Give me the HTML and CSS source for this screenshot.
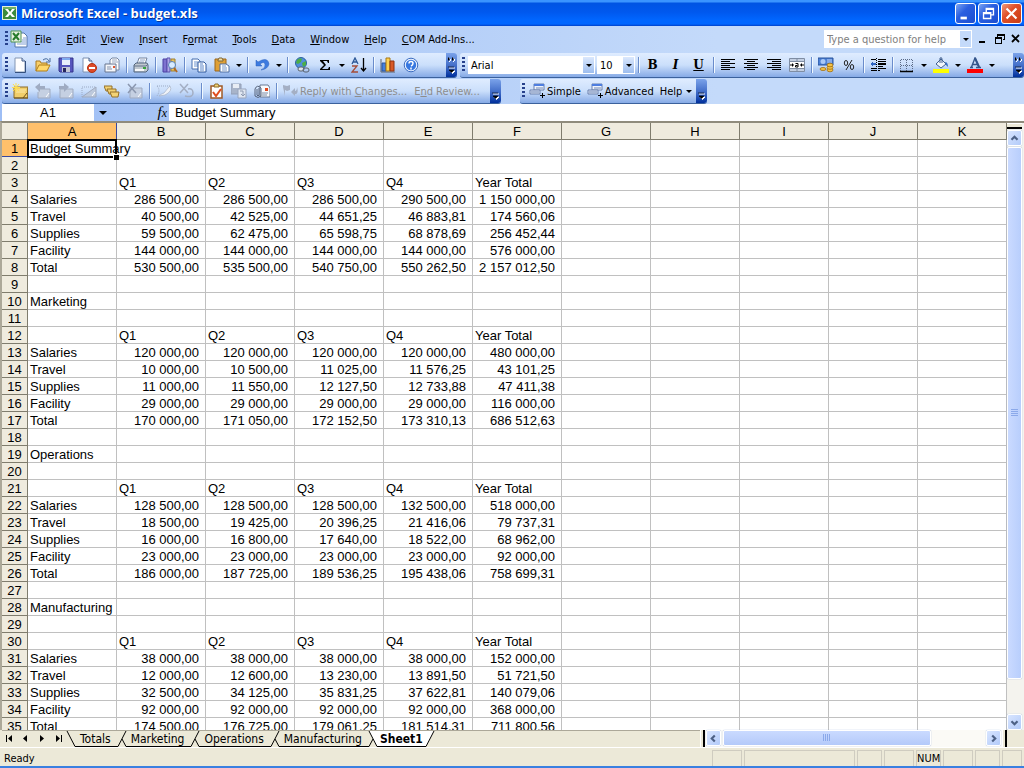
FILE: index.html
```html
<!DOCTYPE html>
<html lang="en">
<head>
<meta charset="utf-8">
<title>Microsoft Excel - budget.xls</title>
<link rel="stylesheet" href="styles.css">
</head>
<body>
<div class="window">
  <header class="titlebar">
    <svg class="icon" viewBox="0 0 16 16"><path d="M0 1h15v14H0z" fill="#e6efdf"/><path d="M1 2h13v12H1z" fill="#3c8a3c"/><path d="M1 2h13v2H1z" fill="#6fb065"/><path d="M3 4h3l2 3 2-3h3l-3.500 4L13 12h-3L8 9.500 6 12H3l3.500-4z" fill="#fff"/></svg>
    <h1 class="title">Microsoft Excel - budget.xls</h1>
    <button class="winbtn" aria-label="Minimize"><svg viewBox="0 0 21 21"><path d="M5 14h7v3H5z" fill="#fff"/></svg></button>
    <button class="winbtn" aria-label="Restore"><svg viewBox="0 0 21 21"><path d="M8 9V5h8v7h-3M8 6h8M5 9.500h8V16H5zM5 10.500h8" fill="none" stroke="#fff" stroke-width="1.500"/></svg></button>
    <button class="winbtn winbtn-close" aria-label="Close"><svg viewBox="0 0 21 21"><path d="M5 5l11 11M16 5L5 16" stroke="#fff" stroke-width="2.400"/></svg></button>
  </header>

  <div class="bars">
    <nav class="menubar">
      <span class="grip"></span>
      <svg class="icon book" viewBox="0 0 18 18"><path d="M5 3h9l3 3v11H5z" fill="#fff" stroke="#5577aa"/><path d="M13 8h3M12 10h4M11 12h5M7 14h9" stroke="#7e9fd4"/><path d="M1 1h10v11H1z" fill="#e6f0e0" stroke="#4f9450"/><path d="M3 3l6 7M9 3l-6 7" stroke="#267b2b" stroke-width="2"/></svg>
      <button class="menu"><u>F</u>ile</button>
      <button class="menu"><u>E</u>dit</button>
      <button class="menu"><u>V</u>iew</button>
      <button class="menu"><u>I</u>nsert</button>
      <button class="menu">F<u>o</u>rmat</button>
      <button class="menu"><u>T</u>ools</button>
      <button class="menu"><u>D</u>ata</button>
      <button class="menu"><u>W</u>indow</button>
      <button class="menu"><u>H</u>elp</button>
      <button class="menu"><u>C</u>OM Add-Ins...</button>
      <div class="combo ask">
        <input class="field" type="text" placeholder="Type a question for help" aria-label="Type a question for help">
        <button class="drop" aria-label="Recent questions"><i class="tri"></i></button>
      </div>
      <button class="mdi" aria-label="Minimize workbook"><svg viewBox="0 0 12 12"><path d="M1 8h6v2H1z"/></svg></button>
      <button class="mdi" aria-label="Restore workbook"><svg viewBox="0 0 12 12"><path d="M3 1h8v6H9V6h1V3H4v1H3zM1 4h7v7H1zM2 6v4h5V6z" fill-rule="evenodd"/></svg></button>
      <button class="mdi" aria-label="Close workbook"><svg viewBox="0 0 12 12"><path d="M2 2l7 7M9 2L2 9" stroke="#000" stroke-width="1.800"/></svg></button>
    </nav>

    <div class="row">
      <div class="toolbar tb-standard">
        <span class="grip"></span>
        <button class="tool" aria-label="New"><svg viewBox="0 0 16 16"><path d="M3 1h7l3 3v11H3z" fill="#fff" stroke="#8396b4"/><path d="M13.500 4v11.500H3" fill="none" stroke="#34507e"/><path d="M10 1v3h3" fill="#c9d8ef" stroke="#47618d"/></svg></button>
        <button class="tool" aria-label="Open"><svg viewBox="0 0 16 16"><path d="M1 14V4h4l1 2h6v3" fill="#f8cf6b" stroke="#a87a20"/><path d="M1 14l3-6h11l-3 6z" fill="#ffd86b" stroke="#b07e19"/><path d="M8 3q4-3 6 1M15 1v4h-4" fill="none" stroke="#46699c"/></svg></button>
        <button class="tool" aria-label="Save"><svg viewBox="0 0 16 16"><path d="M1 1h14v14H2l-1-1z" fill="#5655bd" stroke="#34348c"/><path d="M4 1h8v7H4z" fill="#e8eefb"/><path d="M4 1h8v2H4z" fill="#7faaf0"/><path d="M4 10h8v5H4z" fill="#c3c7d6"/><path d="M5 11h3v4H5z" fill="#26265e"/></svg></button>
        <button class="tool" aria-label="Permission"><svg viewBox="0 0 16 16"><path d="M2 1h6l3 3v11H2z" fill="#fff" stroke="#7d90b2"/><path d="M8 1v3h3" fill="#cddcf2" stroke="#47618d"/><circle cx="11" cy="11" r="4.500" fill="#dd4a28" stroke="#b2300f"/><path d="M8 10h6v2H8z" fill="#fff"/></svg></button>
        <button class="tool" aria-label="E-mail"><svg viewBox="0 0 16 16"><path d="M6 7V3l2-2h5l2 2v10H6z" fill="#fff" stroke="#7787a3"/><path d="M8 3h5M8 5h6" stroke="#9aa9c2"/><path d="M1 7h11v8H1z" fill="#f4f6fa" stroke="#66758f"/><path d="M3 10h4M3 12h5" stroke="#8694ad"/><path d="M9 9h2v2H9z" fill="#e2572e"/></svg></button>
        <span class="sep"></span>
        <button class="tool" aria-label="Print"><svg viewBox="0 0 16 16"><path d="M4 7l2-6h8l-2 6z" fill="#fff" stroke="#7484a0"/><path d="M7 3h5M6 5h5" stroke="#8ea4c9"/><path d="M1 8l2-2h11l1 2v5l-2 2H1z" fill="#c0c8d0" stroke="#53657c"/><path d="M1 9h12l2-2" fill="none" stroke="#62738a"/><path d="M2 12h9v2H2z" fill="#f7f8fa"/><path d="M10 10h3v2h-3z" fill="#39a33d"/></svg></button>
        <span class="sep"></span>
        <button class="tool" aria-label="Research"><svg viewBox="0 0 16 16"><path d="M1 2h4v13H1z" fill="#7e72cf" stroke="#4a3fa2"/><path d="M5 1h3v14H5z" fill="#b1a8e8" stroke="#5a50ad"/><path d="M9 2h4v12H9z" fill="#e6c25e" stroke="#a08030"/><circle cx="10" cy="8" r="3.500" fill="#d8ecff" stroke="#5680b4"/><path d="M12 11l3 4" stroke="#b06820" stroke-width="2"/></svg></button>
        <span class="sep"></span>
        <button class="tool" aria-label="Copy"><svg viewBox="0 0 16 16"><path d="M1 2h6l2 2v8H1z" fill="#fff" stroke="#476fae"/><path d="M3 5h4M3 7h4M3 9h4" stroke="#6d94cf"/><path d="M7 5h6l2 2v8H7z" fill="#fff" stroke="#2f599d"/><path d="M9 9h4M9 11h4M9 13h4M9 7h3" stroke="#5b86c9"/></svg></button>
        <button class="tool" aria-label="Paste"><svg viewBox="0 0 16 16"><path d="M1 2h11v12H1z" fill="#dfa036" stroke="#9c671a"/><path d="M4 3l1-2h3l1 2v1H4z" fill="#f3dfa4" stroke="#7d6639"/><path d="M6 7h6l3 2v6H6z" fill="#fff" stroke="#4e6ea3"/><path d="M8 9h4M8 11h5M8 13h5" stroke="#7697ca"/></svg></button>
        <button class="more" aria-label="Paste options"><i class="tri"></i></button>
        <span class="sep"></span>
        <button class="tool" aria-label="Undo"><svg viewBox="0 0 16 16"><path d="M2 3v6h6L6 7q4-3 5 0 1 4-4 6 7-1 8-6-1-6-7-4L4 5z" fill="#3d7be0" stroke="#2b5fbb" stroke-width=".5"/></svg></button>
        <button class="more" aria-label="Undo list"><i class="tri"></i></button>
        <span class="sep"></span>
        <button class="tool" aria-label="Insert Hyperlink"><svg viewBox="0 0 16 16"><circle cx="7" cy="6" r="5.500" fill="#4f8edb" stroke="#2d629f"/><path d="M3 3q3-3 5-1l-1 3-3 2-2-1zM8 6l4-2v4l-3 2z" fill="#4cae45"/><rect x="4" y="10" width="6" height="4" rx="2" fill="#dfe3e8" stroke="#59636f"/><rect x="9" y="11" width="6" height="4" rx="2" fill="none" stroke="#59636f"/></svg></button>
        <button class="tool" aria-label="AutoSum"><svg viewBox="0 0 16 16"><path d="M3 3h9v3h-1l-1-2H6l3 4-4 4h6l1-2h1v3H3v-1l4-4-4-4z"/></svg></button>
        <button class="more" aria-label="AutoSum options"><i class="tri"></i></button>
        <button class="tool" aria-label="Sort Ascending"><svg viewBox="0 0 16 16"><path d="M1 7l3-6 3 6M2 5h4" fill="none" stroke="#2b5797" stroke-width="1.300"/><path d="M1 9h5l-5 6h6" fill="none" stroke="#a44c38" stroke-width="1.300"/><path d="M12.500 1v13M10 11l2.500 3 2.500-3" fill="none" stroke="#000" stroke-width="1.300"/></svg></button>
        <span class="sep"></span>
        <button class="tool" aria-label="Chart Wizard"><svg viewBox="0 0 16 16"><path d="M1 2v13h14" fill="none" stroke="#5a6271"/><path d="M2 6h4v8H2z" fill="#4580df" stroke="#2a549c"/><path d="M6 1h4v13H6z" fill="#ffd24f" stroke="#a77715"/><path d="M10 4h4v10h-4z" fill="#d85a29" stroke="#8f3311"/></svg></button>
        <button class="tool" aria-label="Help"><svg viewBox="0 0 16 16"><circle cx="8" cy="8" r="6.800" fill="#eaf2ff" stroke="#3b6cc0"/><circle cx="8" cy="8" r="5.200" fill="#3878e0"/><path d="M6 6.500q0-2 2-2t2 1.800-2 2.700M8 10.500v2" fill="none" stroke="#fff" stroke-width="1.500"/></svg></button>
        <button class="cap" aria-label="Standard toolbar options"><svg viewBox="0 0 11 24"><path d="M2 4l2 2-2 2M6 4l2 2-2 2" fill="none" stroke="#fff" transform="translate(1 1)"/><path d="M2 4l2 2-2 2zM6 4l2 2-2 2z"/><path d="M3 15h6M4 18h5l-2.500 2.500z" fill="#fff" stroke="#fff"/><path d="M2 14h6M3 17h5l-2.500 2.500z" stroke="#000" stroke-width=".6"/></svg></button>
      </div>
      <div class="toolbar tb-format">
        <span class="grip"></span>
        <div class="combo font"><select class="field" aria-label="Font"><option>Arial</option></select><span class="drop"><i class="tri"></i></span></div>
        <div class="combo size"><select class="field" aria-label="Font Size"><option>10</option></select><span class="drop"><i class="tri"></i></span></div>
        <span class="sep"></span>
        <button class="tool letter">B</button>
        <button class="tool letter italic">I</button>
        <button class="tool letter under">U</button>
        <span class="sep"></span>
        <button class="tool" aria-label="Align Left"><svg class="crisp" viewBox="0 0 16 16"><path d="M1 2h14v1H1zM1 4h9v1H1zM1 6h14v1H1zM1 8h9v1H1zM1 10h14v1H1zM1 12h9v1H1z"/></svg></button>
        <button class="tool" aria-label="Center"><svg class="crisp" viewBox="0 0 16 16"><path d="M1 2h14v1H1zM4 4h8v1H4zM1 6h14v1H1zM4 8h8v1H4zM1 10h14v1H1zM4 12h8v1H4z"/></svg></button>
        <button class="tool" aria-label="Align Right"><svg class="crisp" viewBox="0 0 16 16"><path d="M1 2h14v1H1zM6 4h9v1H6zM1 6h14v1H1zM6 8h9v1H6zM1 10h14v1H1zM6 12h9v1H6z"/></svg></button>
        <button class="tool" aria-label="Merge and Center"><svg viewBox="0 0 16 16"><path d="M.5 1.500h15v13H.5z" fill="#fff" stroke="#7f8da3"/><path d="M1 2h14v2H1zM1 12h14v2H1z" fill="#c3cfe2"/><path d="M0 4.500h16M0 11.500h16M8 1v3M8 12v3" stroke="#7f8da3"/><path d="M1 8h3M12 8h3" stroke="#000"/><path d="M3 6l2 2-2 2zM13 6l-2 2 2 2z"/><path d="M6.500 6.500h2.500v3.500h-2.500v-1.500h2" fill="none" stroke="#000"/></svg></button>
        <span class="sep"></span>
        <button class="tool" aria-label="Currency Style"><svg viewBox="0 0 16 16"><path d="M0 1h15v7H0z" fill="#4b7fd5" stroke="#2a559c"/><circle cx="5" cy="4.500" r="2.500" fill="#a9c9f7"/><path d="M9 3h5M9 5h5" stroke="#c1d7fa"/><g fill="#f3c244" stroke="#a06d12" stroke-width=".8"><ellipse cx="12" cy="13" rx="3" ry="1.800"/><ellipse cx="12" cy="10.500" rx="3" ry="1.800"/><ellipse cx="12" cy="8" rx="3" ry="1.800"/><ellipse cx="5" cy="12" rx="3" ry="1.500"/></g></svg></button>
        <button class="tool" aria-label="Percent Style"><svg viewBox="0 0 16 16"><path d="M11 3L5 13" stroke="#222"/><ellipse cx="5" cy="6" rx="1.700" ry="2.500" fill="none" stroke="#222"/><ellipse cx="11" cy="10" rx="1.700" ry="2.500" fill="none" stroke="#222"/></svg></button>
        <span class="sep"></span>
        <button class="tool" aria-label="Decrease Indent"><svg class="crisp" viewBox="0 0 16 16"><path d="M1 2h5v1H1zM8 2h8v1H8zM8 4h8v1H8zM8 6h8v2H8zM8 9h5v1H8zM1 11h5v1H1zM8 11h8v1H8zM1 13h5v1H1zM8 13h2v1H8z"/><path d="M6.500 1v14" stroke="#000" stroke-dasharray="1 1"/><path d="M0 7l3-3v2h3v2H3v2z" fill="#2f65c3"/></svg></button>
        <span class="sep"></span>
        <button class="tool" aria-label="Borders"><svg viewBox="0 0 16 16"><path d="M1.500 14V2.500h12V14M7.500 3v11M2 8.500h11" fill="none" stroke="#5b6b87" stroke-dasharray="1 1"/><path d="M1 14.500h13" stroke="#000" stroke-width="1.500"/></svg></button>
        <button class="more" aria-label="Border options"><i class="tri"></i></button>
        <button class="tool" aria-label="Fill Color"><svg viewBox="0 0 16 16"><path d="M3 7l5-5 5 5-5 4z" fill="#f2f6fc" stroke="#43618f"/><path d="M7 6V1q2-1 2 1v4" fill="none" stroke="#43618f"/><path d="M12 5q3 0 3 5l-2-2z" fill="#3b73c6"/><path d="M0 12h16v4H0z" fill="#ffff00"/></svg></button>
        <button class="more" aria-label="Fill Color options"><i class="tri"></i></button>
        <button class="tool" aria-label="Font Color"><svg viewBox="0 0 16 16"><path d="M3 10.500h3M9 10.500h5M4.500 10L8 1l4 9M5.500 7.500h5" fill="none" stroke="#34558b" stroke-width="1.400"/><path d="M8 1l4 9" stroke="#34558b" stroke-width="2"/><path d="M0 12h16v4H0z" fill="#ff0000"/></svg></button>
        <button class="more" aria-label="Font Color options"><i class="tri"></i></button>
        <button class="cap" aria-label="Formatting toolbar options"><svg viewBox="0 0 11 24"><path d="M2 4l2 2-2 2M6 4l2 2-2 2" fill="none" stroke="#fff" transform="translate(1 1)"/><path d="M2 4l2 2-2 2zM6 4l2 2-2 2z"/><path d="M3 15h6M4 18h5l-2.500 2.500z" fill="#fff" stroke="#fff"/><path d="M2 14h6M3 17h5l-2.500 2.500z" stroke="#000" stroke-width=".6"/></svg></button>
      </div>
    </div>

    <div class="row">
      <div class="toolbar tb-review">
        <span class="grip"></span>
        <button class="tool" aria-label="New Comment"><svg viewBox="0 0 16 16"><path d="M2 4h14v11H2z" fill="#f1ce6a" stroke="#8a6a2a"/><path d="M4 7h10M4 9h9" stroke="#fbe9a9"/><path d="M11 15l4-5M2 15h14V5" fill="none" stroke="#6f541c"/><path d="M4 0v9M0 4.500h8M1 1l6 7M7 1L1 8" stroke="#ffdf52"/></svg></button>
        <button class="tool" aria-label="Previous Comment"><svg viewBox="0 0 16 16"><path d="M4 6h11v9H3V9" fill="#c5d0e2" stroke="#a0abc0"/><path d="M0 4l5-4v3h5v3H5v3z" fill="#9fabc2"/><path d="M11 14l3-4" stroke="#fff"/></svg></button>
        <button class="tool" aria-label="Next Comment"><svg viewBox="0 0 16 16"><path d="M2 6h13v9H2z" fill="#c5d0e2" stroke="#a0abc0"/><path d="M11 4L6 0v3H1v3h5v3z" fill="#9fabc2"/><path d="M11 14l3-4" stroke="#fff"/></svg></button>
        <button class="tool" aria-label="Show Comment"><svg viewBox="0 0 16 16"><path d="M1 14V4h14" fill="none" stroke="#9dabc4" stroke-dasharray="1 1"/><path d="M1 14L15 4v10z" fill="#bdc9dc" stroke="#a0abc0"/><path d="M11 13l3-4" stroke="#fff"/></svg></button>
        <button class="tool" aria-label="Show All Comments"><svg viewBox="0 0 16 16"><g fill="#f3d375" stroke="#94702a"><path d="M0 3h8v5H2z"/><path d="M3 6h9v5H5z"/><path d="M6 9h9l-1 5H8z"/></g></svg></button>
        <button class="tool" aria-label="Delete Comment"><svg viewBox="0 0 16 16"><path d="M3 5h12v10H3z" fill="#c5d0e2" stroke="#a0abc0"/><path d="M1 1l8 9M9 1L1 10" stroke="#8b97af" stroke-width="1.500"/><path d="M11 14l3-4" stroke="#fff"/></svg></button>
        <span class="sep"></span>
        <button class="tool" aria-label="Show Ink"><svg viewBox="0 0 16 16"><path d="M1 3h13M1 3q4 4 0 10" fill="none" stroke="#9dabc4" stroke-dasharray="1 1"/><path d="M14 3q3 5-5 9l-6 1q2-2 5-3 3-4 6-7z" fill="#eef2f8" stroke="#a8b3c7" stroke-width=".7"/></svg></button>
        <button class="tool" aria-label="Delete Ink"><svg viewBox="0 0 16 16"><path d="M1 1l8 9M9 1L1 10M6 13q8 2 8-3t-5-4" fill="none" stroke="#a3aec3" stroke-width="1.500"/></svg></button>
        <span class="sep"></span>
        <button class="tool" aria-label="Create Task"><svg viewBox="0 0 16 16"><path d="M3 3h11v12H3z" fill="#fff" stroke="#a05a24" stroke-width="1.500"/><path d="M6 3l1-2h3l1 2v1H6z" fill="#f3d375" stroke="#8a6a2a"/><path d="M5 9l3 4 5-7" fill="none" stroke="#df4c1c" stroke-width="2"/></svg></button>
        <button class="tool" aria-label="Update File"><svg viewBox="0 0 16 16"><path d="M0 1h10v10H0z" fill="#a8b4c9" stroke="#919eb6"/><path d="M2 1h6v4H2z" fill="#e8edf5"/><path d="M7 6h8v9H7z" fill="#dfe6f1" stroke="#98a5bd"/><path d="M9 8h3v4M10 11l2 2 2-2" stroke="#8e9ab1" fill="none"/></svg></button>
        <button class="tool" aria-label="Send as Attachment"><svg viewBox="0 0 16 16"><path d="M6 2h8l2 3v9H6z" fill="#f8fafd" stroke="#697993"/><path d="M11 5h3v3h-3z" fill="#e0481d"/><path d="M8 10h6M8 12h5" stroke="#7d8ca6"/><path d="M5 5v7q-1 2-2 0V6M1 13V6q2-5 6-1v8q-3 3-6 0" fill="none" stroke="#56637a"/></svg></button>
        <span class="sep"></span>
        <button class="text-tool muted" disabled><svg class="icon" viewBox="0 0 16 16"><path d="M1 2l4 1 3-1v5L5 8 3 7v6L1 4z" fill="#a4afc4"/><path d="M9 9l4-4v3q2 0 2-4 2 7-2 7v2z" fill="#a4afc4"/></svg><span>Reply with <u>C</u>hanges...</span></button>
        <button class="text-tool muted" disabled><span>E<u>n</u>d Review...</span></button>
        <button class="cap" aria-label="Reviewing toolbar options"><svg viewBox="0 0 11 24"><path d="M3 15h6M4 18h5l-2.500 2.500z" fill="#fff" stroke="#fff"/><path d="M2 14h6M3 17h5l-2.500 2.500z" stroke="#000" stroke-width=".6"/></svg></button>
      </div>
      <div class="toolbar tb-addin">
        <span class="grip"></span>
        <button class="text-tool"><svg class="icon" viewBox="0 0 16 16"><path d="M5 1h10v6H5z" fill="#eef3fc" stroke="#6b80ad"/><path d="M5 1h10v2H5z" fill="#4e7ee0"/><path d="M1 7h10v4H1z" fill="#dae3f4" stroke="#6b80ad"/><path d="M2 9h8M7 5h7" stroke="#7289b5"/><path d="M13.500 10v5M11 12.500h5" stroke="#000"/></svg><span>Simple</span></button>
        <button class="text-tool"><svg class="icon" viewBox="0 0 16 16"><path d="M5 1h10v6H5z" fill="#eef3fc" stroke="#6b80ad"/><path d="M5 1h10v2H5z" fill="#4e7ee0"/><path d="M1 7h10v4H1z" fill="#dae3f4" stroke="#6b80ad"/><path d="M2 9h8M7 5h7" stroke="#7289b5"/><path d="M13.500 10v5M11 12.500h5" stroke="#000"/></svg><span>Advanced</span></button>
        <button class="text-tool"><span>Help</span><i class="tri"></i></button>
        <button class="cap" aria-label="Add-in toolbar options"><svg viewBox="0 0 11 24"><path d="M3 15h6M4 18h5l-2.500 2.500z" fill="#fff" stroke="#fff"/><path d="M2 14h6M3 17h5l-2.500 2.500z" stroke="#000" stroke-width=".6"/></svg></button>
      </div>
    </div>

    <div class="formula">
      <input class="namebox" type="text" value="A1" aria-label="Name Box">
      <button class="namedrop" aria-label="Names"><i class="tri big"></i></button>
      <button class="fx" aria-label="Insert Function"><i>f</i><i class="fx-sub">x</i></button>
      <input class="formula-text" type="text" value="Budget Summary" aria-label="Formula Bar">
    </div>
  </div>

  <main class="sheet">
    <div class="grid-view">
      <table class="grid">
        <thead><tr id="heads"><th class="corner"></th></tr></thead>
        <tbody id="cells"></tbody>
      </table>
    </div>
    <div class="vscroll">
      <span class="split-h"></span>
      <button class="scrollbtn" aria-label="Scroll up"><svg viewBox="0 0 15 15"><path d="M4 9l3.500-3.500L11 9" /></svg></button>
      <div class="vtrack"><span class="thumb"><svg viewBox="0 0 8 8"><path d="M0 .5h7M0 2.500h7M0 4.500h7M0 6.500h7"/></svg></span></div>
      <button class="scrollbtn" aria-label="Scroll down"><svg viewBox="0 0 15 15"><path d="M4 6l3.500 3.500L11 6" /></svg></button>
    </div>
  </main>

  <div class="tabrow">
    <div class="tabs">
      <button class="nav" aria-label="First sheet"><svg viewBox="0 0 12 12"><path d="M2 2h1v7H2zM8 2v7L4 5.500z"/></svg></button>
      <button class="nav" aria-label="Previous sheet"><svg viewBox="0 0 12 12"><path d="M7 2v7L3 5.500z"/></svg></button>
      <button class="nav" aria-label="Next sheet"><svg viewBox="0 0 12 12"><path d="M4 2v7l4-3.500z"/></svg></button>
      <button class="nav" aria-label="Last sheet"><svg viewBox="0 0 12 12"><path d="M9 2h1v7H9zM4 2v7l4-3.500z"/></svg></button>
      <svg class="slant" viewBox="0 0 10 16"><path d="M1 0l8 15.500h1" /></svg>
      <button class="tab">Totals</button>
      <svg class="slant" viewBox="0 0 10 16"><path d="M0 15.500h1L9 0M5 8l4 7.500h1"/></svg>
      <button class="tab">Marketing</button>
      <svg class="slant" viewBox="0 0 10 16"><path d="M0 15.500h1L9 0M5 8l4 7.500h1"/></svg>
      <button class="tab">Operations</button>
      <svg class="slant" viewBox="0 0 10 16"><path d="M0 15.500h1L9 0M5 8l4 7.500h1"/></svg>
      <button class="tab">Manufacturing</button>
      <svg class="slant" viewBox="0 0 10 16"><path class="fill" d="M1 0h9v16H9z"/><path d="M0 15.500h1L5 8M1 0l8 15.500h1"/></svg>
      <button class="tab active">Sheet1</button>
      <svg class="slant" viewBox="0 0 10 16"><path class="fill" d="M0 0h9L1 16H0z"/><path d="M0 15.500h1L9 0"/></svg>
    </div>
    <div class="hscroll">
      <span class="split-v"></span>
      <button class="scrollbtn" aria-label="Scroll left"><svg viewBox="0 0 15 15"><path d="M9 4L5.500 7.500 9 11"/></svg></button>
      <div class="htrack"><span class="thumb"><svg viewBox="0 0 8 8"><path d="M.5 0v7M2.500 0v7M4.500 0v7M6.500 0v7"/></svg></span></div>
      <button class="scrollbtn" aria-label="Scroll right"><svg viewBox="0 0 15 15"><path d="M6 4l3.500 3.500L6 11"/></svg></button>
      <span class="split-v"></span>
    </div>
  </div>

  <footer class="status">
    <span class="ready">Ready</span>
    <span class="pane p-s"></span><span class="pane p-l"></span><span class="pane p-xs"></span><span class="pane p-s"></span><span class="pane p-xs">NUM</span><span class="pane p-s"></span><span class="pane p-xs"></span><span class="pane p-end"></span>
  </footer>
</div>
<script src="grid.js"></script>
</body>
</html>
```

FILE: grid.js
```js
const heads = ["", "Q1", "Q2", "Q3", "Q4", "Year Total"];
const rows = [
  ["Budget Summary"],
  [],
  heads,
  ["Salaries", "286 500,00", "286 500,00", "286 500,00", "290 500,00", "1 150 000,00"],
  ["Travel", "40 500,00", "42 525,00", "44 651,25", "46 883,81", "174 560,06"],
  ["Supplies", "59 500,00", "62 475,00", "65 598,75", "68 878,69", "256 452,44"],
  ["Facility", "144 000,00", "144 000,00", "144 000,00", "144 000,00", "576 000,00"],
  ["Total", "530 500,00", "535 500,00", "540 750,00", "550 262,50", "2 157 012,50"],
  [],
  ["Marketing"],
  [],
  heads,
  ["Salaries", "120 000,00", "120 000,00", "120 000,00", "120 000,00", "480 000,00"],
  ["Travel", "10 000,00", "10 500,00", "11 025,00", "11 576,25", "43 101,25"],
  ["Supplies", "11 000,00", "11 550,00", "12 127,50", "12 733,88", "47 411,38"],
  ["Facility", "29 000,00", "29 000,00", "29 000,00", "29 000,00", "116 000,00"],
  ["Total", "170 000,00", "171 050,00", "172 152,50", "173 310,13", "686 512,63"],
  [],
  ["Operations"],
  [],
  heads,
  ["Salaries", "128 500,00", "128 500,00", "128 500,00", "132 500,00", "518 000,00"],
  ["Travel", "18 500,00", "19 425,00", "20 396,25", "21 416,06", "79 737,31"],
  ["Supplies", "16 000,00", "16 800,00", "17 640,00", "18 522,00", "68 962,00"],
  ["Facility", "23 000,00", "23 000,00", "23 000,00", "23 000,00", "92 000,00"],
  ["Total", "186 000,00", "187 725,00", "189 536,25", "195 438,06", "758 699,31"],
  [],
  ["Manufacturing"],
  [],
  heads,
  ["Salaries", "38 000,00", "38 000,00", "38 000,00", "38 000,00", "152 000,00"],
  ["Travel", "12 000,00", "12 600,00", "13 230,00", "13 891,50", "51 721,50"],
  ["Supplies", "32 500,00", "34 125,00", "35 831,25", "37 622,81", "140 079,06"],
  ["Facility", "92 000,00", "92 000,00", "92 000,00", "92 000,00", "368 000,00"],
  ["Total", "174 500,00", "176 725,00", "179 061,25", "181 514,31", "711 800,56"]
];
const letters = [..."ABCDEFGHIJK"];
const headRow = document.getElementById("heads");
const body = document.getElementById("cells");

function addCell(row, tag, text, cls) {
  const cell = document.createElement(tag);
  cell.textContent = text;
  if (cls) cell.className = cls;
  row.appendChild(cell);
  return cell;
}

letters.forEach((letter, i) => addCell(headRow, "th", letter, i === 0 ? "on" : ""));

rows.forEach((values, r) => {
  const row = document.createElement("tr");
  addCell(row, "th", r + 1, r === 0 ? "on" : "");
  letters.forEach((_, c) => {
    const text = values[c] || "";
    const cell = addCell(row, "td", text, text.includes(",") ? "num" : "");
    if (r === 0 && c === 0) {
      cell.className = "selected";
      const handle = document.createElement("span");
      handle.className = "handle";
      cell.appendChild(handle);
    }
  });
  body.appendChild(row);
});
```

FILE: styles.css
```css
* { box-sizing: border-box; }
body { margin: 0; }
button, input, select {
  font: inherit; color: inherit; border: 0; margin: 0; padding: 0;
  background: none; border-radius: 0; outline: 0;
}
svg { display: block; flex: none; }
.window {
  display: flex; flex-direction: column; height: 100vh; overflow: hidden;
  background: #ece9d8; border-bottom: 2px solid #3a80e0;
  font-family: "DejaVu Sans Condensed", "DejaVu Sans", sans-serif;
  font-size: 11px; color: #000;
}
.icon { width: 16px; height: 16px; }
.crisp { shape-rendering: crispEdges; }

.titlebar {
  display: flex; align-items: center; gap: 2px; height: 26px; flex: none; padding: 0 2px;
  background: linear-gradient(#3a94ff 0, #3a94ff 2px, #0054e3 3px, #0058ee 12px, #0066ff 20px, #0066ff 24px, #0040c8 26px);
}
.title {
  flex: 1; margin: 0; padding-left: 1px; font-size: 13px; line-height: 24px; font-weight: bold;
  font-family: "Open Sans", sans-serif; color: #fff; text-shadow: 1px 1px #0a3296;
}
.winbtn {
  width: 21px; height: 21px; border: 1px solid #fff; border-radius: 3px;
  background: linear-gradient(135deg, #7ba4f3, #2a5fe0 40%, #1c4ed0);
}
.winbtn svg { width: 19px; height: 19px; }
.winbtn-close { background: linear-gradient(135deg, #f09a7c, #e0502a 40%, #c83c14); }

.bars { flex: none; background: linear-gradient(90deg, #9ebef5, #c4dafa 70%); }
.menubar { display: flex; align-items: center; height: 26px; padding: 0 2px; }
.grip {
  width: 3px; height: 16px; margin: 0 2px 0 3px; flex: none;
  background: repeating-linear-gradient(#27418c 0, #27418c 2px, transparent 2px, transparent 4px);
}
.book { width: 18px; height: 18px; }
.menu { padding: 0 8px 0 7px; height: 20px; }
.combo { display: flex; background: #fff; padding: 1px; height: 18px; }
.combo .field { flex: 1; min-width: 0; padding-left: 2px; appearance: none; }
.drop {
  width: 11px; flex: none; display: flex; align-items: center; justify-content: center;
  background: linear-gradient(#dbe8fd, #9dbdee); pointer-events: none;
}
.ask { width: 148px; margin: 0 4px 0 auto; }
.ask .field::placeholder { color: #808080; opacity: 1; }
.ask .drop { background: #c4dafa; }
.mdi { width: 12px; margin-left: 2px; }
.mdi + .mdi { margin-left: 4px; }
.mdi svg { width: 12px; height: 12px; }
.tri { border: 3px solid transparent; border-top-color: #000; border-bottom: 0; }
.tri.big { border-width: 4px; border-bottom: 0; }

.row { display: flex; height: 26px; padding: 1px 0 0 2px; }
.toolbar {
  display: flex; align-items: center; height: 25px; border-radius: 3px;
  background: linear-gradient(#dfecff, #cbdffb 50%, #86aae6); border-bottom: 1px solid #3b619c;
}
.toolbar .grip { margin: 0 1px 0 2px; }
.tool {
  width: 23px; height: 22px; flex: none; display: flex; align-items: center; justify-content: center;
}
.tool svg { width: 16px; height: 16px; }
.sep { width: 6px; height: 16px; flex: none; background: linear-gradient(90deg, transparent 3px, #6a8ccb 3px, #6a8ccb 4px, #f1f9ff 4px, #f1f9ff 5px, transparent 5px); }
.more { width: 11px; height: 22px; flex: none; display: flex; align-items: center; justify-content: center; }
.cap {
  width: 11px; height: 24px; margin-left: auto; flex: none; border-radius: 0 3px 3px 0;
  background: linear-gradient(#7ba3ea, #3a66c4 60%, #00309c);
}
.cap svg { width: 11px; height: 24px; }
.tb-standard { width: 455px; margin-right: 3px; }
.tb-format { flex: 1; }
.tb-review { width: 499px; margin-right: 19px; }
.tb-addin { width: 187px; }
.tb-standard .grip, .tb-review .grip { margin-left: 3px; margin-right: 0; }
.font { width: 127px; margin: 0 2px; }
.size { width: 38px; }
.letter { font-family: "DejaVu Serif", serif; font-weight: bold; font-size: 12px; }
.italic { font-style: italic; }
.under { text-decoration: underline; }
.text-tool { display: flex; align-items: center; gap: 2px; padding: 0 3px; flex: none; white-space: nowrap; }
.muted { color: #8d8d8d; }
.tb-review .text-tool { padding-right: 4px; }
.tb-addin .text-tool .tri { margin-left: 2px; }

.formula { display: flex; height: 17px; padding-left: 2px; font-family: "Liberation Sans", Arial, sans-serif; font-size: 13px; }
.namebox { width: 92px; background: #fff; text-align: center; }
.namedrop { width: 18px; display: flex; align-items: center; justify-content: center; }
.fx { width: 57px; padding-right: 2px; text-align: right; font-family: "Liberation Serif", serif; font-size: 15px; line-height: 15px; }
.fx-sub { font-size: 12px; }
.formula-text { flex: 1; background: #fff; padding-left: 6px; }

.sheet { flex: 1; min-height: 0; display: flex; border-top: 2px solid #8f8b7c; border-left: 2px solid #aca899; }
.grid-view { flex: 1; min-width: 0; overflow: hidden; background: #fff; }
.grid {
  table-layout: fixed; border-collapse: separate; border-spacing: 0; width: 1005px;
  font-family: "Liberation Sans", Arial, sans-serif; font-size: 13px; line-height: 14px;
}
.grid th, .grid td { height: 17px; border-right: 1px solid #c0c0c0; border-bottom: 1px solid #c0c0c0; white-space: nowrap; }
.grid td { padding: 2px 6px 0 2px; }
.grid th { width: 89px; padding: 2px 0 0; font-weight: normal; background: #efebde; border-color: #7f7c6d; }
.grid th.corner { width: 26px; }
.grid th.on { background: #ffc06b; border-color: #3848a0; }
.grid .num { text-align: right; }
.grid .selected { position: relative; }
.selected::after { content: ""; position: absolute; inset: -1px -1px -2px -1px; border: 2px solid #000; }
.handle { position: absolute; right: -3px; bottom: -4px; width: 6px; height: 6px; background: #000; border: 1px solid #fff; border-width: 1px 0 0 1px; z-index: 1; }

.vscroll { width: 17px; flex: none; display: flex; flex-direction: column; padding-right: 2px; background: #f4f3ee; }
.split-h { height: 6px; background: #ece9d8; border-top: 1px solid #fff; border-bottom: 2px solid #000; flex: none; }
.scrollbtn {
  width: 15px; height: 15px; flex: none; border: 1px solid #fff; border-radius: 2px;
  background: linear-gradient(135deg, #d8e5ff, #b3cbf9); box-shadow: 0 0 1px #7f9fd8;
}
.scrollbtn svg { width: 13px; height: 13px; fill: none; stroke: #4d6185; stroke-width: 2.500; }
.vscroll .scrollbtn { height: 16px; margin-top: 1px; }
.vtrack { flex: 1; padding-top: 1px; }
.vtrack .thumb { width: 15px; height: 94%; background: linear-gradient(90deg, #cadaff, #b8cefc); }
.thumb {
  display: flex; align-items: center; justify-content: center; border: 1px solid #fff;
  border-radius: 2px; box-shadow: 0 0 1px #6f8fcc; background: linear-gradient(#cadaff, #b4cafa);
}
.thumb svg { width: 8px; height: 8px; stroke: #8ba9ea; }

.tabrow { display: flex; height: 17px; flex: none; padding-left: 2px; background: #ece9d8; }
.tabs { flex: 1; display: flex; border-top: 1px solid #aca899; }
.nav { width: 16px; height: 16px; display: flex; align-items: center; justify-content: center; }
.nav svg { width: 12px; height: 12px; }
.slant { width: 10px; height: 16px; fill: none; stroke: #000; }
.slant .fill { fill: #fff; stroke: none; }
.tab { height: 16px; padding: 1px 6px 0 4px; font-size: 12px; line-height: 14px; border-bottom: 1px solid #000; white-space: nowrap; }
.tab.active { background: #fff; font-weight: bold; padding: 1px 2px 0; }
.hscroll { width: 324px; flex: none; display: flex; background: #fbfaf6; padding-right: 17px; box-shadow: inset -17px 0 #ece9d8; }
.split-v { width: 5px; flex: none; background: #ece9d8; border-left: 1px solid #fff; border-right: 2px solid #000; margin-right: 1px; }
.split-v:last-child { margin: 0 0 0 1px; }
.hscroll .scrollbtn { height: 16px; }
.htrack { flex: 1; display: flex; padding-left: 2px; }
.htrack .thumb { width: 79%; height: 16px; }

.status { display: flex; align-items: stretch; gap: 2px; height: 19px; flex: none; padding: 2px 2px 0 4px; border-top: 1px solid #fff; line-height: 16px; }
.ready { flex: 1; }
.pane { border: 1px solid #cfccc0; border-bottom: 0; text-align: center; }
.p-xs { width: 25px; }
.p-s { width: 30px; }
.p-l { width: 111px; }
.p-end { width: 20px; }
.status .ready { padding-top: 1px; }
```
